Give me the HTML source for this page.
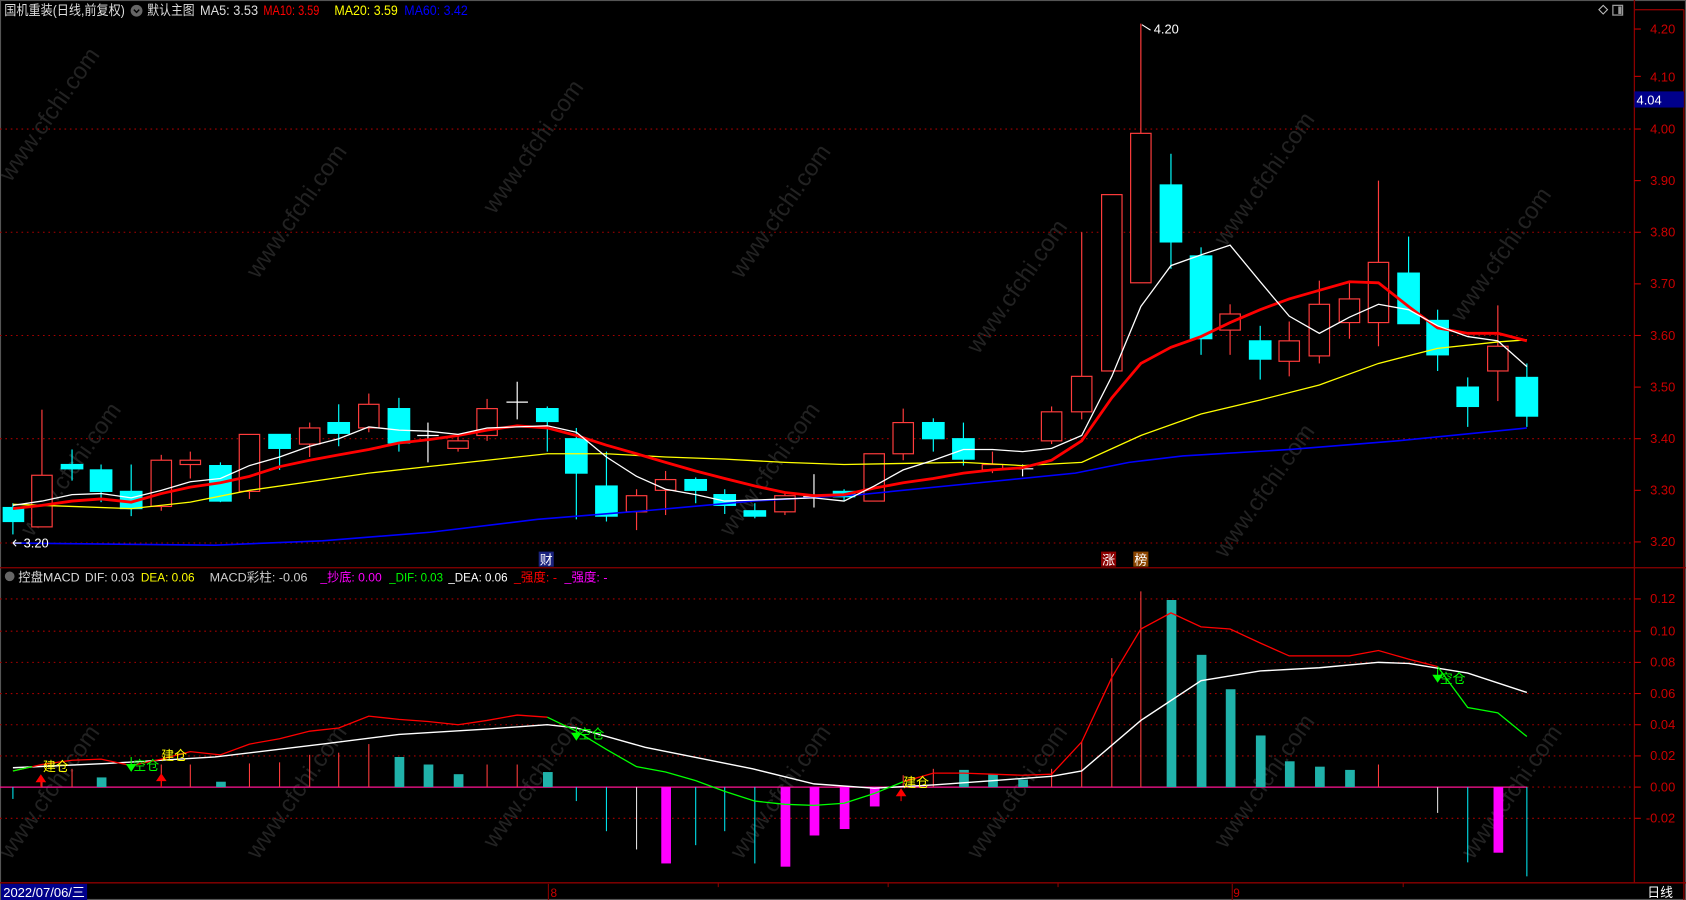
<!DOCTYPE html>
<html><head><meta charset="utf-8"><style>
html,body{margin:0;padding:0;background:#000;width:1686px;height:900px;overflow:hidden}
svg{display:block}
text{font-family:"Liberation Sans","Noto Sans CJK SC",sans-serif}
</style></head><body>
<svg width="1686" height="900" viewBox="0 0 1568 837" preserveAspectRatio="none" xmlns="http://www.w3.org/2000/svg">
<rect width="1568" height="837" fill="#000"/>
<g fill="#222" font-size="22">
<text transform="translate(10,170) rotate(-55)">www.cfchi.com</text>
<text transform="translate(240,260) rotate(-55)">www.cfchi.com</text>
<text transform="translate(460,200) rotate(-55)">www.cfchi.com</text>
<text transform="translate(690,260) rotate(-55)">www.cfchi.com</text>
<text transform="translate(910,330) rotate(-55)">www.cfchi.com</text>
<text transform="translate(1140,230) rotate(-55)">www.cfchi.com</text>
<text transform="translate(1360,300) rotate(-55)">www.cfchi.com</text>
<text transform="translate(30,500) rotate(-55)">www.cfchi.com</text>
<text transform="translate(680,500) rotate(-55)">www.cfchi.com</text>
<text transform="translate(1140,520) rotate(-55)">www.cfchi.com</text>
<text transform="translate(10,800) rotate(-55)">www.cfchi.com</text>
<text transform="translate(240,800) rotate(-55)">www.cfchi.com</text>
<text transform="translate(460,790) rotate(-55)">www.cfchi.com</text>
<text transform="translate(690,800) rotate(-55)">www.cfchi.com</text>
<text transform="translate(910,800) rotate(-55)">www.cfchi.com</text>
<text transform="translate(1140,790) rotate(-55)">www.cfchi.com</text>
<text transform="translate(1370,800) rotate(-55)">www.cfchi.com</text>
</g>
<rect x="0.5" y="0.5" width="1567" height="836" fill="none" stroke="#555" stroke-width="1"/>
<g stroke="#8b0000" stroke-width="1.2">
<line x1="1520" y1="0" x2="1520" y2="821"/>
<line x1="0" y1="528" x2="1568" y2="528"/>
<line x1="0" y1="821" x2="1568" y2="821"/>
<line x1="1566" y1="9" x2="1566" y2="837"/>
<line x1="1520" y1="9" x2="1566" y2="9"/>
</g>
<g stroke="#a00" stroke-width="1" stroke-dasharray="1.5,3.5">
<line x1="0" y1="120" x2="1520" y2="120"/>
<line x1="0" y1="216" x2="1520" y2="216"/>
<line x1="0" y1="312" x2="1520" y2="312"/>
<line x1="0" y1="408" x2="1520" y2="408"/>
<line x1="0" y1="505" x2="1520" y2="505"/>
<line x1="0" y1="557" x2="1520" y2="557"/>
<line x1="0" y1="587" x2="1520" y2="587"/>
<line x1="0" y1="616" x2="1520" y2="616"/>
<line x1="0" y1="645" x2="1520" y2="645"/>
<line x1="0" y1="674" x2="1520" y2="674"/>
<line x1="0" y1="703" x2="1520" y2="703"/>
<line x1="1420" y1="732" x2="1520" y2="732"/>
<line x1="0" y1="761" x2="1520" y2="761"/>
</g>
<g fill="#c00" font-size="12" text-anchor="end">
<text x="1558" y="31">4.20</text><text x="1558" y="76">4.10</text><text x="1558" y="124">4.00</text>
<text x="1558" y="172">3.90</text><text x="1558" y="220">3.80</text><text x="1558" y="268">3.70</text>
<text x="1558" y="316">3.60</text><text x="1558" y="364">3.50</text><text x="1558" y="412">3.40</text>
<text x="1558" y="460">3.30</text><text x="1558" y="508">3.20</text>
<text x="1558" y="561">0.12</text><text x="1558" y="591">0.10</text><text x="1558" y="620">0.08</text>
<text x="1558" y="649">0.06</text><text x="1558" y="678">0.04</text><text x="1558" y="707">0.02</text>
<text x="1558" y="736">0.00</text><text x="1558" y="765">-0.02</text>
</g>
<g stroke="#c00" stroke-width="1">
<line x1="1520" y1="27" x2="1526" y2="27"/><line x1="1520" y1="71" x2="1526" y2="71"/><line x1="1520" y1="120" x2="1526" y2="120"/>
<line x1="1520" y1="168" x2="1526" y2="168"/><line x1="1520" y1="216" x2="1526" y2="216"/><line x1="1520" y1="264" x2="1526" y2="264"/>
<line x1="1520" y1="312" x2="1526" y2="312"/><line x1="1520" y1="360" x2="1526" y2="360"/><line x1="1520" y1="408" x2="1526" y2="408"/>
<line x1="1520" y1="456" x2="1526" y2="456"/><line x1="1520" y1="504" x2="1526" y2="504"/>
<line x1="1520" y1="557" x2="1526" y2="557"/><line x1="1520" y1="587" x2="1526" y2="587"/><line x1="1520" y1="616" x2="1526" y2="616"/>
<line x1="1520" y1="645" x2="1526" y2="645"/><line x1="1520" y1="674" x2="1526" y2="674"/><line x1="1520" y1="703" x2="1526" y2="703"/>
<line x1="1520" y1="732" x2="1526" y2="732"/><line x1="1520" y1="761" x2="1526" y2="761"/>
</g>
<rect x="1520" y="85" width="46" height="15" fill="#00008b"/>
<text x="1522" y="97" fill="#fff" font-size="12">4.04</text>
<g font-size="12.5">
<text x="4" y="14" fill="#ddd" textLength="112" lengthAdjust="spacingAndGlyphs">国机重装(日线,前复权)</text>
<circle cx="127" cy="10" r="5.5" fill="#666"/><path d="M124.5 9 l2.5 2.5 l2.5 -2.5" stroke="#000" stroke-width="1.3" fill="none"/>
<text x="137" y="14" fill="#ddd" textLength="44" lengthAdjust="spacingAndGlyphs">默认主图</text>
<text x="186" y="14" fill="#ddd" textLength="54" lengthAdjust="spacingAndGlyphs">MA5: 3.53</text>
<text x="245" y="14" fill="#f00" textLength="52" lengthAdjust="spacingAndGlyphs">MA10: 3.59</text>
<text x="311" y="14" fill="#ff0" textLength="59" lengthAdjust="spacingAndGlyphs">MA20: 3.59</text>
<text x="376" y="14" fill="#00f" textLength="59" lengthAdjust="spacingAndGlyphs">MA60: 3.42</text>
</g>
<path d="M1491 5 l4 4 l-4 4 l-4 -4z" fill="none" stroke="#bbb"/>
<rect x="1500" y="5" width="9" height="9" fill="none" stroke="#999" stroke-width="1.2"/><rect x="1505" y="6" width="3" height="7" fill="#999"/>
<g stroke-width="1.1">
<g stroke="#00ffff" fill="#00ffff">
<line x1="12" y1="468" x2="12" y2="497"/><rect x="3" y="472" width="19" height="13"/>
<line x1="67" y1="418" x2="67" y2="447"/><rect x="57" y="432" width="20" height="4"/>
<line x1="94" y1="432" x2="94" y2="467"/><rect x="84" y="437" width="20" height="20"/>
<line x1="122" y1="432" x2="122" y2="480"/><rect x="112" y="457" width="20" height="16"/>
<line x1="205" y1="430" x2="205" y2="467"/><rect x="195" y="433" width="20" height="33"/>
<line x1="260" y1="404" x2="260" y2="437"/><rect x="250" y="404" width="20" height="13"/>
<line x1="315" y1="376" x2="315" y2="415"/><rect x="305" y="393" width="20" height="10"/>
<line x1="371" y1="370" x2="371" y2="420"/><rect x="361" y="380" width="20" height="32"/>
<line x1="509" y1="378" x2="509" y2="420"/><rect x="499" y="380" width="20" height="12"/>
<line x1="536" y1="398" x2="536" y2="483"/><rect x="526" y="408" width="20" height="32"/>
<line x1="564" y1="420" x2="564" y2="485"/><rect x="554" y="452" width="20" height="28"/>
<line x1="647" y1="444" x2="647" y2="468"/><rect x="637" y="446" width="20" height="10"/>
<line x1="674" y1="455" x2="674" y2="478"/><rect x="664" y="460" width="20" height="10"/>
<line x1="702" y1="468" x2="702" y2="482"/><rect x="692" y="475" width="20" height="5"/>
<line x1="785" y1="455" x2="785" y2="466"/><rect x="775" y="457" width="20" height="5"/>
<line x1="868" y1="389" x2="868" y2="420"/><rect x="858" y="393" width="20" height="15"/>
<line x1="896" y1="393" x2="896" y2="433"/><rect x="886" y="408" width="20" height="19"/>
<line x1="1089" y1="143" x2="1089" y2="250"/><rect x="1079" y="172" width="20" height="53"/>
<line x1="1117" y1="230" x2="1117" y2="330"/><rect x="1107" y="238" width="20" height="77"/>
<line x1="1172" y1="303" x2="1172" y2="353"/><rect x="1162" y="317" width="20" height="17"/>
<line x1="1310" y1="220" x2="1310" y2="301"/><rect x="1300" y="254" width="20" height="47"/>
<line x1="1337" y1="288" x2="1337" y2="345"/><rect x="1327" y="298" width="20" height="32"/>
<line x1="1365" y1="351" x2="1365" y2="397"/><rect x="1355" y="360" width="20" height="18"/>
<line x1="1420" y1="338" x2="1420" y2="397"/><rect x="1410" y="351" width="20" height="36"/>
</g>
<g stroke="#ff3c3c" fill="#000">
<line x1="39" y1="381" x2="39" y2="490"/><rect x="29.5" y="442" width="19" height="48"/>
<line x1="150" y1="423" x2="150" y2="475"/><rect x="140.5" y="428" width="19" height="43"/>
<line x1="177" y1="420" x2="177" y2="445"/><rect x="167.5" y="428" width="19" height="4"/>
<line x1="232" y1="404" x2="232" y2="464"/><rect x="222.5" y="404" width="19" height="53"/>
<line x1="288" y1="393" x2="288" y2="425"/><rect x="278.5" y="398" width="19" height="15"/>
<line x1="343" y1="366" x2="343" y2="402"/><rect x="333.5" y="376" width="19" height="22"/>
<line x1="426" y1="405" x2="426" y2="420"/><rect x="416.5" y="410" width="19" height="7"/>
<line x1="453" y1="371" x2="453" y2="410"/><rect x="443.5" y="380" width="19" height="25"/>
<line x1="592" y1="455" x2="592" y2="493"/><rect x="582.5" y="461" width="19" height="15"/>
<line x1="619" y1="438" x2="619" y2="479"/><rect x="609.5" y="446" width="19" height="10"/>
<line x1="730" y1="457" x2="730" y2="479"/><rect x="720.5" y="461" width="19" height="15"/>
<line x1="813" y1="422" x2="813" y2="466"/><rect x="803.5" y="422" width="19" height="44"/>
<line x1="840" y1="380" x2="840" y2="428"/><rect x="830.5" y="393" width="19" height="29"/>
<line x1="923" y1="420" x2="923" y2="440"/><rect x="913.5" y="432" width="19" height="5"/>
<line x1="978" y1="378" x2="978" y2="413"/><rect x="968.5" y="383" width="19" height="27"/>
<line x1="1006" y1="216" x2="1006" y2="390"/><rect x="996.5" y="350" width="19" height="33"/>
<line x1="1034" y1="181" x2="1034" y2="345"/><rect x="1024.5" y="181" width="19" height="164"/>
<line x1="1061" y1="22" x2="1061" y2="263"/><rect x="1051.5" y="124" width="19" height="139"/>
<line x1="1144" y1="283" x2="1144" y2="330"/><rect x="1134.5" y="292" width="19" height="15"/>
<line x1="1199" y1="299" x2="1199" y2="350"/><rect x="1189.5" y="317" width="19" height="19"/>
<line x1="1227" y1="261" x2="1227" y2="338"/><rect x="1217.5" y="283" width="19" height="48"/>
<line x1="1255" y1="262" x2="1255" y2="315"/><rect x="1245.5" y="278" width="19" height="22"/>
<line x1="1282" y1="168" x2="1282" y2="322"/><rect x="1272.5" y="244" width="19" height="56"/>
<line x1="1393" y1="284" x2="1393" y2="373"/><rect x="1383.5" y="322" width="19" height="23"/>
</g>
<g stroke="#fff">
<line x1="398" y1="393" x2="398" y2="430"/><line x1="388" y1="405" x2="408" y2="405"/>
<line x1="481" y1="355" x2="481" y2="390"/><line x1="471" y1="374" x2="491" y2="374"/>
<line x1="757" y1="441" x2="757" y2="472"/><line x1="747" y1="462" x2="767" y2="462"/>
<line x1="951" y1="432" x2="951" y2="443"/><line x1="941" y1="436" x2="961" y2="436"/>
</g>
</g>
<polyline fill="none" stroke="#0000ff" stroke-width="1.5" points="12,505 100,506 200,507 300,503 400,495 500,483 600,475 700,466 800,460 900,450 1000,440 1050,430 1100,424 1200,418 1300,410 1420,398"/>
<polyline fill="none" stroke="#ffff00" stroke-width="1.2" points="12,469 67,471 122,473 177,467 232,456 288,448 343,440 398,434 453,428 509,422 564,422 619,425 674,427 730,430 785,432 840,431 896,430 951,433 1006,430 1061,405 1117,385 1172,372 1227,358 1282,338 1337,324 1393,318 1420,316"/>
<polyline fill="none" stroke="#ff0000" stroke-width="2.6" points="12,473 39,470 67,466 94,464 122,467 150,459 177,453 205,449 232,443 260,434 288,428 315,423 343,418 371,412 398,409 426,405 453,400 481,396 509,398 536,405 564,414 592,422 619,430 647,438 674,445 702,452 730,458 757,461 785,460 813,454 840,449 868,445 896,440 923,437 951,435 978,428 1006,410 1034,370 1061,338 1089,323 1117,313 1144,300 1172,288 1199,278 1227,270 1255,262 1282,263 1310,285 1337,305 1365,310 1393,310 1420,317"/>
<polyline fill="none" stroke="#fff" stroke-width="1.2" points="12,470 39,466 67,460 94,459 122,463 150,456 177,448 205,445 232,433 260,425 288,415 315,408 343,397 371,400 398,401 426,404 453,398 481,397 509,396 536,402 564,425 592,443 619,455 647,460 674,466 702,465 730,464 757,463 785,466 813,452 840,437 868,428 896,418 923,418 951,420 978,417 1006,405 1034,350 1061,285 1089,247 1117,237 1144,228 1172,262 1199,294 1227,310 1255,295 1282,283 1310,288 1337,303 1365,313 1393,317 1420,341"/>
<text x="1073" y="31" fill="#fff" font-size="12">4.20</text><path d="M1062 23 l8 5" stroke="#fff"/>
<text x="22" y="509" fill="#fff" font-size="12">3.20</text><path d="M12 505 h8 M12 505 l3 -3 M12 505 l3 3" stroke="#fff" fill="none"/>
<rect x="501" y="513" width="14" height="14" fill="#1a237e"/><text x="502" y="525" fill="#fff" font-size="12">财</text>
<rect x="1024" y="513" width="14" height="14" fill="#8b0000"/><text x="1025" y="525" fill="#fff" font-size="12">涨</text>
<rect x="1054" y="513" width="14" height="14" fill="#8b4500"/><text x="1055" y="525" fill="#fff" font-size="12">榜</text>
<g font-size="11.5">
<circle cx="9" cy="536" r="4.5" fill="#666"/>
<text x="17" y="541" fill="#ddd" textLength="57" lengthAdjust="spacingAndGlyphs">控盘MACD</text>
<text x="79" y="541" fill="#ddd" textLength="46" lengthAdjust="spacingAndGlyphs">DIF: 0.03</text>
<text x="131" y="541" fill="#ff0" textLength="50" lengthAdjust="spacingAndGlyphs">DEA: 0.06</text>
<text x="195" y="541" fill="#ccc" textLength="91" lengthAdjust="spacingAndGlyphs">MACD彩柱: -0.06</text>
<text x="298" y="541" fill="#ff00ff" textLength="57" lengthAdjust="spacingAndGlyphs">_抄底: 0.00</text>
<text x="362" y="541" fill="#0f0" textLength="50" lengthAdjust="spacingAndGlyphs">_DIF: 0.03</text>
<text x="417" y="541" fill="#fff" textLength="55" lengthAdjust="spacingAndGlyphs">_DEA: 0.06</text>
<text x="478" y="541" fill="#f00" textLength="40" lengthAdjust="spacingAndGlyphs">_强度: -</text>
<text x="525" y="541" fill="#ff00ff" textLength="40" lengthAdjust="spacingAndGlyphs">_强度: -</text>
</g>
<line x1="0" y1="732" x2="1420" y2="732" stroke="#ff1493" stroke-width="1.2"/>
<g stroke-width="1">
<g stroke="#ff3c3c">
<line x1="39" y1="724" x2="39" y2="732"/><line x1="67" y1="715" x2="67" y2="732"/><line x1="150" y1="711" x2="150" y2="732"/><line x1="177" y1="711" x2="177" y2="732"/>
<line x1="232" y1="710" x2="232" y2="732"/><line x1="260" y1="709" x2="260" y2="732"/><line x1="288" y1="702" x2="288" y2="732"/><line x1="315" y1="700" x2="315" y2="732"/>
<line x1="343" y1="692" x2="343" y2="732"/><line x1="453" y1="711" x2="453" y2="732"/><line x1="481" y1="711" x2="481" y2="732"/><line x1="840" y1="721" x2="840" y2="732"/>
<line x1="868" y1="715" x2="868" y2="732"/><line x1="978" y1="715" x2="978" y2="732"/><line x1="1006" y1="690" x2="1006" y2="732"/><line x1="1034" y1="612" x2="1034" y2="732"/>
<line x1="1061" y1="550" x2="1061" y2="732"/><line x1="1282" y1="711" x2="1282" y2="732"/>
</g>
<g stroke="#00e5ee">
<line x1="12" y1="732" x2="12" y2="743"/><line x1="536" y1="732" x2="536" y2="745"/><line x1="564" y1="732" x2="564" y2="773"/><line x1="647" y1="732" x2="647" y2="786"/>
<line x1="674" y1="732" x2="674" y2="773"/><line x1="702" y1="732" x2="702" y2="803"/><line x1="1365" y1="732" x2="1365" y2="802"/><line x1="1420" y1="732" x2="1420" y2="815"/>
</g>
<g stroke="#ddd"><line x1="592" y1="732" x2="592" y2="790"/><line x1="1337" y1="732" x2="1337" y2="756"/></g>
</g>
<g fill="#20b2aa">
<rect x="90" y="723" width="9" height="9"/><rect x="201" y="727" width="9" height="5"/><rect x="367" y="704" width="9" height="28"/>
<rect x="394" y="711" width="9" height="21"/><rect x="422" y="720" width="9" height="12"/><rect x="505" y="718" width="9" height="14"/>
<rect x="892" y="716" width="9" height="16"/><rect x="919" y="720" width="9" height="12"/><rect x="947" y="725" width="9" height="7"/>
<rect x="1085" y="558" width="9" height="174"/><rect x="1113" y="609" width="9" height="123"/><rect x="1140" y="641" width="9" height="91"/>
<rect x="1168" y="684" width="9" height="48"/><rect x="1195" y="708" width="9" height="24"/><rect x="1223" y="713" width="9" height="19"/>
<rect x="1251" y="716" width="9" height="16"/>
</g>
<g fill="#ff00ff">
<rect x="615" y="732" width="9" height="71"/><rect x="726" y="732" width="9" height="74"/><rect x="753" y="732" width="9" height="45"/>
<rect x="781" y="732" width="9" height="39"/><rect x="809" y="732" width="9" height="18"/><rect x="1389" y="732" width="9" height="61"/>
</g>
<polyline fill="none" stroke="#fff" stroke-width="1.3" points="12,714 100,710 200,704 300,692 371,683 453,678 509,674 536,677 600,695 700,715 757,729 813,733 868,730 923,726 978,722 1006,717 1061,670 1117,633 1172,624 1227,621 1282,616 1310,617 1365,626 1420,644"/>
<polyline fill="none" stroke="#ff0000" stroke-width="1.2" points="12,717 39,711 67,707 94,706 122,712 150,706 177,699 205,702 232,692 260,687 288,680 315,677 343,666 371,669 398,671 426,674 453,670 481,665 509,667"/>
<polyline fill="none" stroke="#00ff00" stroke-width="1.2" points="509,667 536,680 564,697 592,713 619,718 647,726 674,736 702,745 730,748 757,749 785,747 813,738 840,727"/>
<polyline fill="none" stroke="#ff0000" stroke-width="1.2" points="840,727 868,719 896,719 923,720 951,721 978,720 1006,690 1034,630 1061,585 1089,570 1117,583 1144,585 1172,598 1199,610 1227,610 1255,610 1282,605 1310,613 1337,620"/>
<polyline fill="none" stroke="#00ff00" stroke-width="1.2" points="1337,620 1365,658 1393,663 1420,685"/>
<polyline fill="none" stroke="#00ff00" stroke-width="1.2" points="12,717 30,713"/>
<g font-size="12">
<text x="40" y="717" fill="#ff0">建仓</text><path d="M38 732 v-8 M34 727 l4 -6 l4 6z" stroke="#f00" fill="#f00"/>
<text x="150" y="707" fill="#ff0">建仓</text><path d="M150 732 v-10 M146 726 l4 -6 l4 6z" stroke="#f00" fill="#f00"/>
<text x="840" y="732" fill="#ff0">建仓</text><path d="M838 745 v-8 M834 740 l4 -6 l4 6z" stroke="#f00" fill="#f00"/>
<text x="124" y="716" fill="#0f0">空仓</text><path d="M122 704 v10 M118 711 l4 6 l4 -6z" stroke="#0f0" fill="#0f0"/>
<text x="538" y="687" fill="#0f0">空仓</text><path d="M536 676 v8 M532 682 l4 6 l4 -6z" stroke="#0f0" fill="#0f0"/>
<text x="1339" y="635" fill="#0f0">空仓</text><path d="M1337 622 v8 M1333 628 l4 6 l4 -6z" stroke="#0f0" fill="#0f0"/>
</g>
<rect x="1" y="822" width="80" height="15" fill="#00008b"/>
<text x="3" y="834" fill="#fff" font-size="12" textLength="76" lengthAdjust="spacingAndGlyphs">2022/07/06/三</text>
<line x1="510" y1="822" x2="510" y2="837" stroke="#8b0000"/><text x="512" y="834" fill="#c00" font-size="11">8</text>
<line x1="1146" y1="822" x2="1146" y2="837" stroke="#8b0000"/><text x="1147" y="834" fill="#c00" font-size="11">9</text>
<g stroke="#8b0000"><line x1="668" y1="821" x2="668" y2="825"/><line x1="826" y1="821" x2="826" y2="825"/><line x1="984" y1="821" x2="984" y2="825"/><line x1="1305" y1="821" x2="1305" y2="825"/></g>
<text x="1532" y="834" fill="#fff" font-size="12">日线</text>
</svg>
</body></html>
